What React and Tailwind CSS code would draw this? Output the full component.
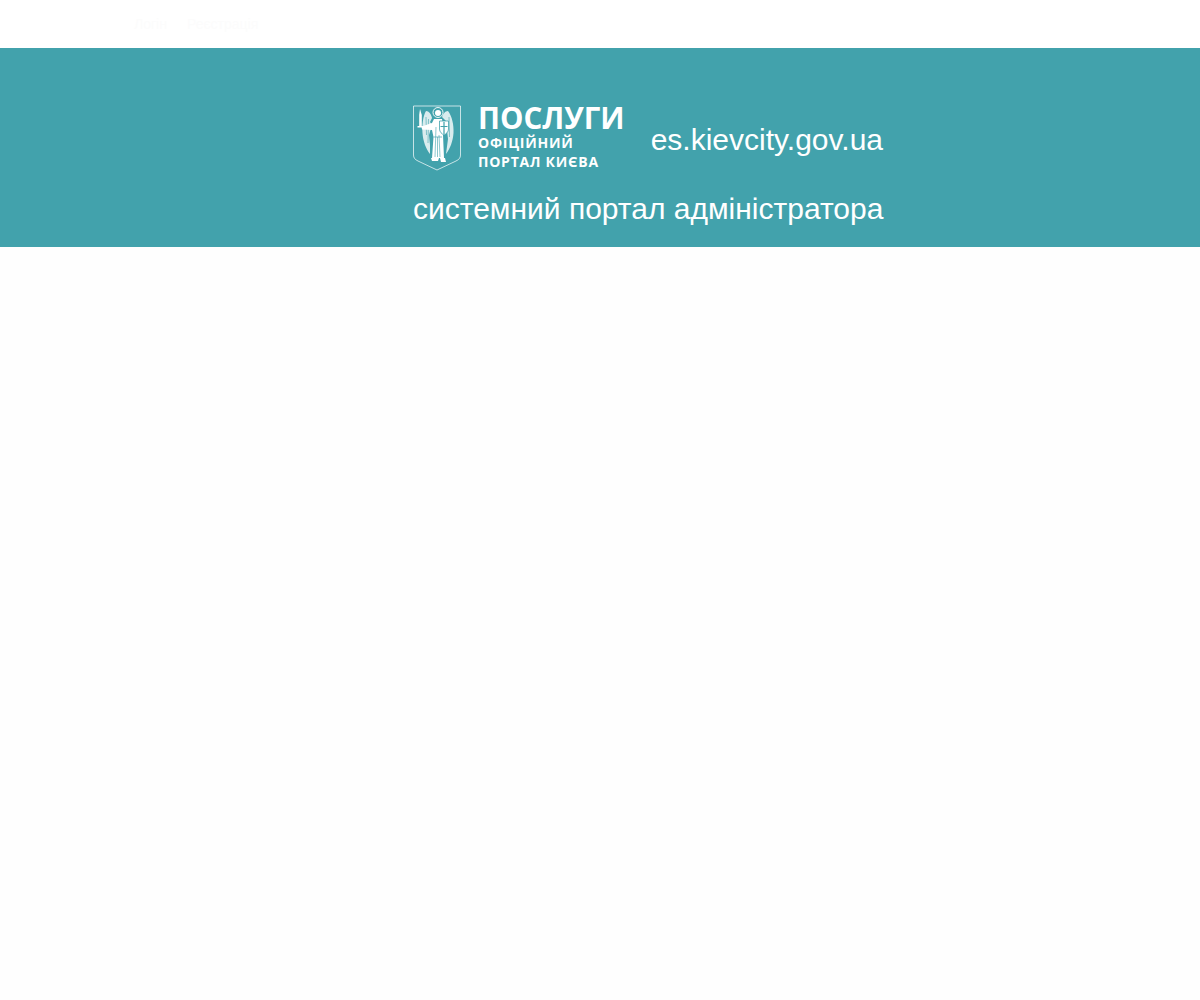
// App.jsx
function KyivCrest() {
  return (
    <svg className="w-[50px] h-[66px] shrink-0 mt-[2px]" viewBox="0 0 50 66" fill="none">
      {/* shield */}
      <path d="M0.500 1H47.500V50C47.500 53 46 54.500 43 56L24 65L5 56C2 54.500 0.500 53 0.500 50V1Z" stroke="#fff" strokeWidth="0.7" />
      {/* left wing */}
      <path d="M13 6C16 6 18 9 19 13L17 17L19 20L16 30L17 40L17 49C13 44 10 36 9.500 28C9 20 10 11 13 6Z" fill="#fff" fillOpacity="0.8" />
      <path d="M13 12L13.500 30M15.500 14L15 38" stroke="#42a2ac" strokeWidth="0.6" />
      {/* right wing */}
      <path d="M35 6C32 6 30 9 29 12L33 16L35 34L33 49C37 44 40 36 40.500 28C41 20 39 11 35 6Z" fill="#fff" fillOpacity="0.8" />
      <path d="M36 12L36.500 32" stroke="#42a2ac" strokeWidth="0.6" />
      {/* halo and head */}
      <circle cx="25" cy="7.500" r="5" stroke="#fff" strokeWidth="0.9" />
      <circle cx="25" cy="8" r="3" fill="#fff" />
      {/* body with arm raised to the sword */}
      <path d="M21 14H29L30 22L30 30L31 53H19L20.500 32L19 25L9 24.500L8.500 21.500L19 18Z" fill="#fff" />
      {/* feet */}
      <path d="M18 53H26L25 56H19ZM27 53H32L33 57H28Z" fill="#fff" />
      {/* sword */}
      <path d="M7 4L8.800 10L8.800 21H6.200L6.200 10Z" fill="#fff" />
      <path d="M4.500 21H11V22.500H4.500Z" fill="#fff" />
      {/* cross shield */}
      <path d="M26.500 16H35.500V24C35.500 27 33 29 31 30C29 29 26.500 27 26.500 24Z" fill="#fff" stroke="#42a2ac" strokeWidth="0.8" />
      <path d="M31 17V29M27.500 21.500H34.500" stroke="#42a2ac" strokeWidth="1.200" />
      {/* robe folds */}
      <path d="M23 22L22 52M26 30L27 52M24.500 32V52" stroke="#42a2ac" strokeWidth="0.6" />
      <path d="M20.500 32H29" stroke="#42a2ac" strokeWidth="0.7" />
    </svg>
  );
}

export default function App() {
  return (
    <div className="min-h-screen bg-[#fefefe] font-['Liberation_Sans',sans-serif]">
      {/* Navigation, its white text barely shows on the white bar */}
      <header className="h-12 bg-white flex items-center pl-[134px]">
        <div className="flex gap-5 text-sm text-[#fcfcfc]">
          <span>Логін</span>
          <span>Реєстрація</span>
        </div>
      </header>

      {/* Banner */}
      <section className="h-[199px] bg-[#42a2ac] pl-[413px] pt-[55px] text-white">
        <div className="w-[470px]">
          <div className="flex items-start">
            <KyivCrest />
            <div className="ml-[15px] font-['Open_Sans',sans-serif] font-bold">
              <div className="text-[29.5px] leading-[30px]">ПОСЛУГИ</div>
              <div className="mt-px text-[14px] leading-[18px] tracking-[0.77px]">ОФІЦІЙНИЙ</div>
              <div className="mt-px text-[14px] leading-[18px] tracking-[0.77px]">ПОРТАЛ КИЄВА</div>
            </div>
            <div className="ml-auto mt-[19px] text-[30px] leading-9">es.kievcity.gov.ua</div>
          </div>
          <div className="mt-[20px] text-[30px] leading-9 whitespace-nowrap">системний портал адміністратора</div>
        </div>
      </section>
    </div>
  );
}
